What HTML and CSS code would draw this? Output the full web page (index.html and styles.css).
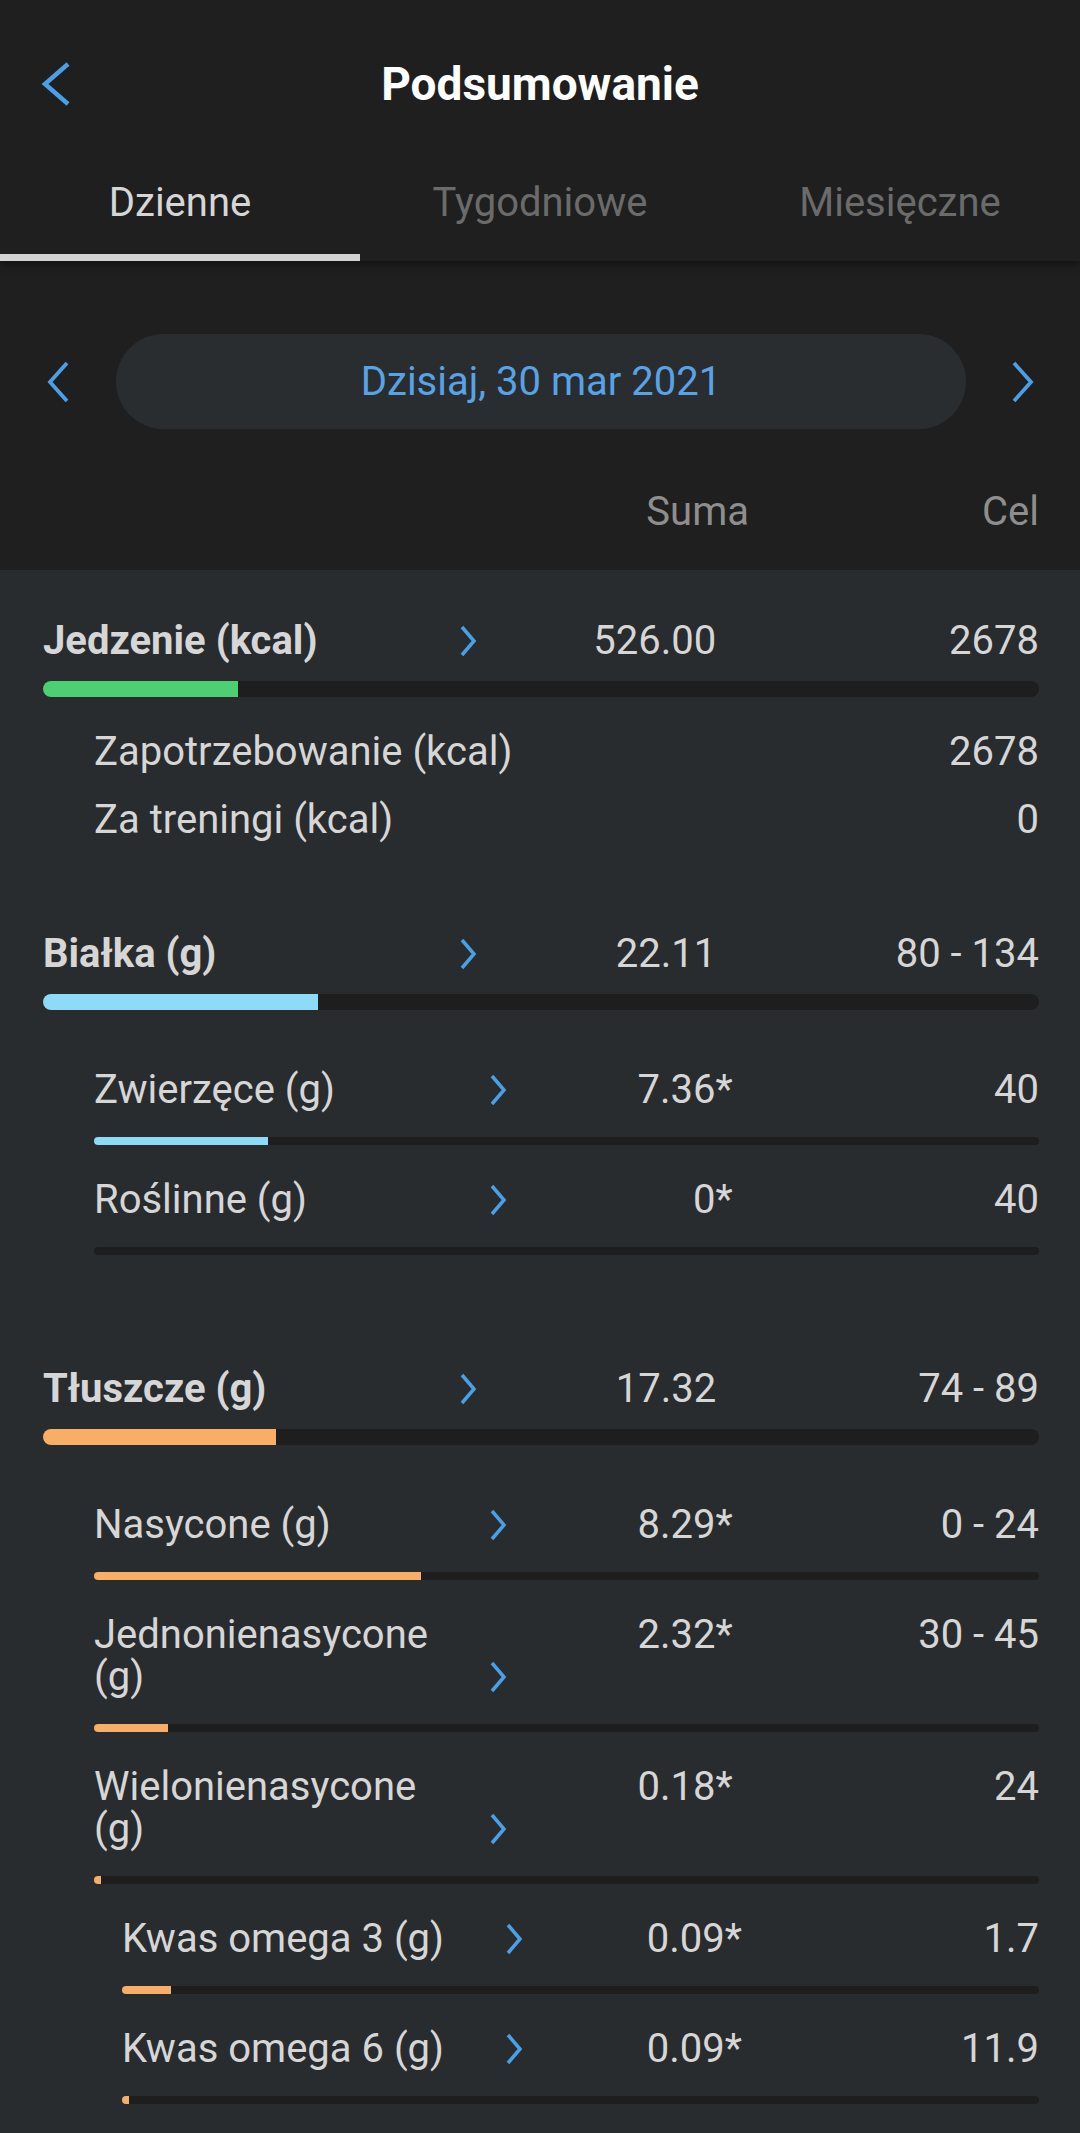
FILE: index.html
```html
<!DOCTYPE html>
<html lang="pl">
<head>
<meta charset="utf-8">
<title>Podsumowanie</title>
<link rel="stylesheet" href="styles.css">
</head>
<body>
<header class="appbar">
  <div class="toolbar">
    <button class="back" aria-label="Wstecz">
      <svg width="32" height="46" viewBox="0 0 32 46"><polyline points="28,3 5,23 28,43" fill="none" stroke="#4b9fe6" stroke-width="4.5"/></svg>
    </button>
    <h1 class="title">Podsumowanie</h1>
  </div>
  <nav class="tabs">
    <div class="tab active">Dzienne</div>
    <div class="tab">Tygodniowe</div>
    <div class="tab">Miesięczne</div>
  </nav>
</header>

<section class="datebar">
  <div class="datenav">
    <div class="navbtn"><svg width="26" height="42" viewBox="0 0 26 42"><polyline points="22,2 5,21 22,40" fill="none" stroke="#4b9fe6" stroke-width="3.8"/></svg></div>
    <div class="pill">Dzisiaj, 30 mar 2021</div>
    <div class="navbtn"><svg width="26" height="42" viewBox="0 0 26 42"><polyline points="4,2 21,21 4,40" fill="none" stroke="#4b9fe6" stroke-width="3.8"/></svg></div>
  </div>
  <div class="colheads">
    <span></span><span>Suma</span><span class="right">Cel</span>
  </div>
</section>

<main class="content">
  <div class="sec sec-energy">
    <div class="row main">
      <div class="label">Jedzenie (kcal)</div>
      <div class="mid"><span class="chev"><svg width="18" height="32" viewBox="0 0 18 32"><polyline points="3,2 15,16 3,30" fill="none" stroke="#4b9fe6" stroke-width="3.5"/></svg></span><span class="val">526.00</span></div>
      <div class="goal">2678</div>
    </div>
    <div class="bar big"><div class="fill green" style="width:19.6%"></div></div>
    <div class="info first"><span>Zapotrzebowanie (kcal)</span><span>2678</span></div>
    <div class="info"><span>Za treningi (kcal)</span><span>0</span></div>
  </div>

  <div class="sec sec-protein">
    <div class="row main">
      <div class="label">Białka (g)</div>
      <div class="mid"><span class="chev"><svg width="18" height="32" viewBox="0 0 18 32"><polyline points="3,2 15,16 3,30" fill="none" stroke="#4b9fe6" stroke-width="3.5"/></svg></span><span class="val">22.11</span></div>
      <div class="goal">80 - 134</div>
    </div>
    <div class="bar big"><div class="fill blue" style="width:27.6%"></div></div>
    <div class="sublist">
      <div class="sub">
        <div class="row">
          <div class="label">Zwierzęce (g)</div>
          <div class="mid"><span class="chev"><svg width="18" height="32" viewBox="0 0 18 32"><polyline points="3,2 15,16 3,30" fill="none" stroke="#4b9fe6" stroke-width="3.5"/></svg></span><span class="val">7.36*</span></div>
          <div class="goal">40</div>
        </div>
        <div class="bar"><div class="fill blue" style="width:18.4%"></div></div>
      </div>
      <div class="sub">
        <div class="row">
          <div class="label">Roślinne (g)</div>
          <div class="mid"><span class="chev"><svg width="18" height="32" viewBox="0 0 18 32"><polyline points="3,2 15,16 3,30" fill="none" stroke="#4b9fe6" stroke-width="3.5"/></svg></span><span class="val">0*</span></div>
          <div class="goal">40</div>
        </div>
        <div class="bar"><div class="fill blue" style="width:0%"></div></div>
      </div>
    </div>
  </div>

  <div class="sec sec-fat">
    <div class="row main">
      <div class="label">Tłuszcze (g)</div>
      <div class="mid"><span class="chev"><svg width="18" height="32" viewBox="0 0 18 32"><polyline points="3,2 15,16 3,30" fill="none" stroke="#4b9fe6" stroke-width="3.5"/></svg></span><span class="val">17.32</span></div>
      <div class="goal">74 - 89</div>
    </div>
    <div class="bar big"><div class="fill orange" style="width:23.4%"></div></div>
    <div class="sublist">
      <div class="sub">
        <div class="row">
          <div class="label">Nasycone (g)</div>
          <div class="mid"><span class="chev"><svg width="18" height="32" viewBox="0 0 18 32"><polyline points="3,2 15,16 3,30" fill="none" stroke="#4b9fe6" stroke-width="3.5"/></svg></span><span class="val">8.29*</span></div>
          <div class="goal">0 - 24</div>
        </div>
        <div class="bar"><div class="fill orange" style="width:34.6%"></div></div>
      </div>
      <div class="sub">
        <div class="row">
          <div class="label"><span class="ln">Jednonienasycone</span><span class="ln">(g)</span></div>
          <div class="mid"><span class="chev"><svg width="18" height="32" viewBox="0 0 18 32"><polyline points="3,2 15,16 3,30" fill="none" stroke="#4b9fe6" stroke-width="3.5"/></svg></span><span class="val">2.32*</span></div>
          <div class="goal">30 - 45</div>
        </div>
        <div class="bar"><div class="fill orange" style="width:7.8%"></div></div>
      </div>
      <div class="sub">
        <div class="row">
          <div class="label"><span class="ln">Wielonienasycone</span><span class="ln">(g)</span></div>
          <div class="mid"><span class="chev"><svg width="18" height="32" viewBox="0 0 18 32"><polyline points="3,2 15,16 3,30" fill="none" stroke="#4b9fe6" stroke-width="3.5"/></svg></span><span class="val">0.18*</span></div>
          <div class="goal">24</div>
        </div>
        <div class="bar"><div class="fill orange" style="width:0.75%"></div></div>
      </div>
      <div class="sub l2">
        <div class="row">
          <div class="label">Kwas omega 3 (g)</div>
          <div class="mid"><span class="chev"><svg width="18" height="32" viewBox="0 0 18 32"><polyline points="3,2 15,16 3,30" fill="none" stroke="#4b9fe6" stroke-width="3.5"/></svg></span><span class="val">0.09*</span></div>
          <div class="goal">1.7</div>
        </div>
        <div class="bar"><div class="fill orange" style="width:5.3%"></div></div>
      </div>
      <div class="sub l2">
        <div class="row">
          <div class="label">Kwas omega 6 (g)</div>
          <div class="mid"><span class="chev"><svg width="18" height="32" viewBox="0 0 18 32"><polyline points="3,2 15,16 3,30" fill="none" stroke="#4b9fe6" stroke-width="3.5"/></svg></span><span class="val">0.09*</span></div>
          <div class="goal">11.9</div>
        </div>
        <div class="bar"><div class="fill orange" style="width:0.76%"></div></div>
      </div>
    </div>
  </div>
</main>
</body>
</html>
```
FILE: styles.css
```css
* { box-sizing: border-box; margin: 0; padding: 0; }
html, body { background: #292c2e; }
body {
  width: 1080px;
  min-height: 2133px;
  font-family: Roboto, "Noto Sans", sans-serif;
  color: #d6d6d6;
  overflow: hidden;
}

/* App bar */
.appbar {
  background: #1f1f1f;
  position: relative;
  z-index: 2;
  box-shadow: 0 3px 8px rgba(0, 0, 0, 0.45);
}
.toolbar {
  height: 168px;
  display: grid;
  grid-template-columns: 1fr auto 1fr;
  align-items: center;
}
.back {
  justify-self: start;
  margin-left: 40px;
  display: flex;
  background: none;
  border: 0;
}
.title {
  font-size: 46px;
  font-weight: 700;
  color: #ffffff;
  line-height: 1;
}
.tabs { display: flex; height: 93px; }
.tab {
  flex: 1;
  text-align: center;
  font-size: 40px;
  line-height: 42px;
  padding-top: 14px;
  color: #6b6b6b;
  border-bottom: 7px solid transparent;
}
.tab.active { color: #d6d6d6; border-bottom-color: #d3d3d3; }

/* Date bar */
.datebar {
  background: #1f1f1f;
  height: 309px;
  padding-top: 73px;
}
.datenav {
  display: grid;
  grid-template-columns: 116px 1fr 114px;
  height: 95px;
  align-items: center;
}
.navbtn { display: flex; justify-content: center; }
.pill {
  height: 95px;
  border-radius: 48px;
  background: #2a2d2f;
  color: #58a3e6;
  font-size: 40px;
  display: flex;
  align-items: center;
  justify-content: center;
}
.colheads {
  display: grid;
  grid-template-columns: 1fr auto 290px;
  padding: 62px 41px 0 43px;
  font-size: 40px;
  line-height: 42px;
  color: #8e8e8e;
}
.right { text-align: right; }

/* Content */
.content { padding: 50px 41px 0 43px; }
.row {
  display: grid;
  grid-template-columns: 41.8% 25.8% 1fr;
  font-size: 40px;
  line-height: 42px;
}
.row.main .label { font-weight: 700; }
.ln { display: block; height: 42px; }
.mid { display: flex; justify-content: space-between; }
.chev { height: 42px; display: flex; align-items: center; align-self: flex-end; }
.val { align-self: flex-start; text-align: right; }
.goal { text-align: right; }

.bar {
  height: 8px;
  border-radius: 4px;
  background: #1e1e1e;
  overflow: hidden;
  margin-top: 26px;
}
.bar.big { height: 16px; border-radius: 8px; margin-top: 19px; }
.fill { height: 100%; }
.green { background: #4fcf73; }
.blue { background: #8edbf7; }
.orange { background: #f8ae66; }

.info {
  display: flex;
  justify-content: space-between;
  padding-left: 51px;
  font-size: 40px;
  line-height: 42px;
  margin-top: 26px;
}
.info.first { margin-top: 34px; }

.sec-energy { margin-bottom: 92px; }
.sec-protein { margin-bottom: 113px; }
.sublist { margin-top: 25px; }
.sub { padding-left: 51px; padding-top: 34px; }
.sub.l2 { padding-left: 79px; }
```
